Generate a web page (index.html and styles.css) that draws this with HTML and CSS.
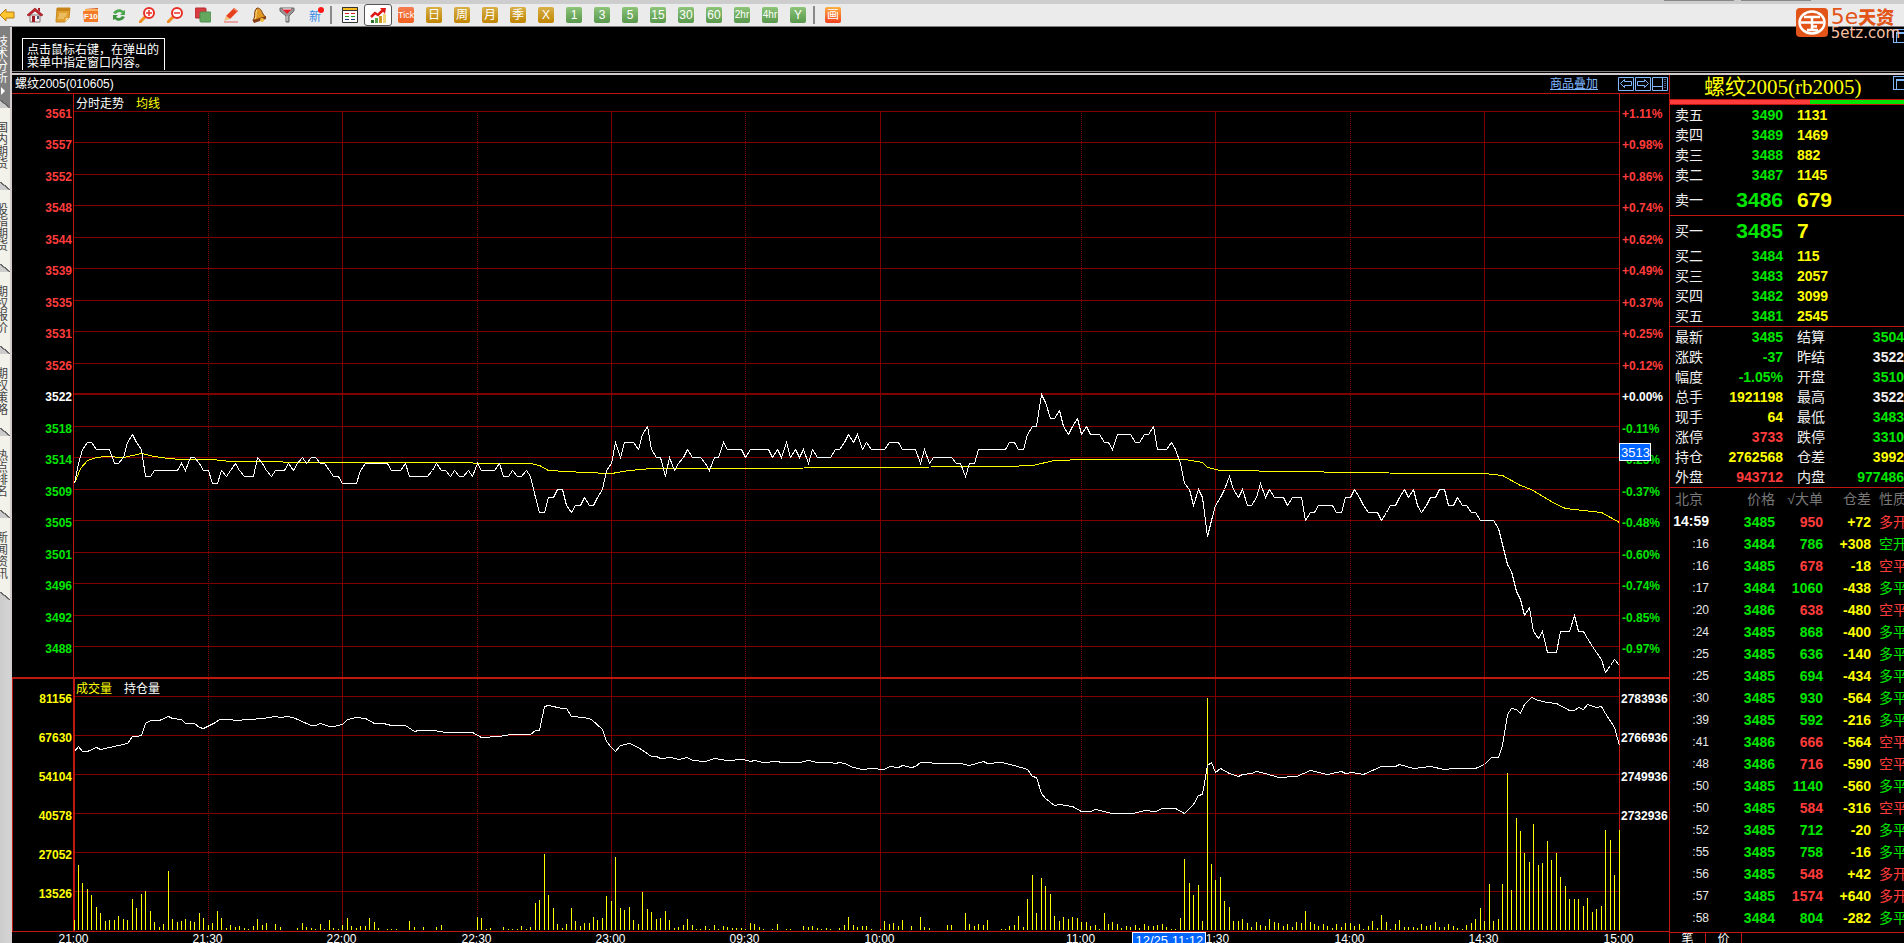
FILE: index.html
```html
<!DOCTYPE html>
<html lang="zh-CN">
<head>
    <meta charset="UTF-8">
    <meta name="viewport" content="width=device-width, initial-scale=1.0">
    <title>螺纹2005 分时走势</title>
    <link rel="stylesheet" href="styles.css">
</head>
<body>
    <div class="titlebar"><span></span><span></span></div>
    <div class="toolbar">
        <button class="tool" aria-label="后退"><svg viewBox="0 0 16 16"><path d="M1 8l6-6v3h8v6H7v3z" fill="#ffc62e" stroke="#b87a10"/></svg></button>
        <button class="tool" aria-label="首页"><svg viewBox="0 0 16 16"><path d="M3 8h10v7H3z" fill="#f4eeee" stroke="#877"/><path d="M0 8l8-7 8 7-2 1-6-5-6 5z" fill="#c4202c" stroke="#8a1018" stroke-width=".6"/><path d="M11 1h2v4l-2-2z" fill="#a02028"/><path d="M5 9h3v6H5z" fill="#a01c28"/><path d="M10 9h2v3h-2z" fill="#557"/></svg></button>
        <button class="tool" aria-label="便笺"><svg viewBox="0 0 16 16"><path d="M2 1h13l-1 10-4 4H1z" fill="#e0a030" stroke="#c88820"/><path d="M2 1h13v3H2z" fill="#c88418"/><path d="M4 7h8M4 9h7M3 11h6" stroke="#f8d890"/><path d="M10 15l1-4h3z" fill="#ffe2a0"/></svg></button>
        <button class="tool" aria-label="F10资料"><svg viewBox="0 0 16 16"><path d="M2 2l13-1v13l-13 1z" fill="#d8501c"/><path d="M0 4h15v11H1z" fill="#f37b28"/><path d="M2 2h13v2H2z" fill="#ffb25c"/><text x="1" y="12" class="icon-f10">F10</text></svg></button>
        <button class="tool" aria-label="刷新"><svg viewBox="0 0 16 16"><path d="M2 6c2-4 8-5 10-2l2-1v5H9l2-2c-2-2-5-1-6 1z" fill="#4ca84c"/><path d="M14 10c-2 4-8 5-10 2l-2 1V8h5l-2 2c2 2 5 1 6-1z" fill="#3c9440"/></svg></button>
        <button class="tool" aria-label="放大"><svg viewBox="0 0 16 16"><path d="M6 10l-5 5" stroke="#f08c20" stroke-width="3" stroke-linecap="round"/><circle cx="10" cy="6" r="5" fill="#fff" stroke="#e83028" stroke-width="2"/><path d="M7 6h6M10 3v6" stroke="#e83028" stroke-width="1.5"/></svg></button>
        <button class="tool" aria-label="缩小"><svg viewBox="0 0 16 16"><path d="M6 10l-5 5" stroke="#f08c20" stroke-width="3" stroke-linecap="round"/><circle cx="10" cy="6" r="5" fill="#fff" stroke="#e83028" stroke-width="2"/><path d="M7 6h6" stroke="#e83028" stroke-width="1.5"/></svg></button>
        <button class="tool" aria-label="叠加"><svg viewBox="0 0 16 16"><rect y="1" width="11" height="10" rx="1" fill="#d83c40" stroke="#b02c30"/><rect x="5" y="5" width="11" height="10" rx="1" fill="#64a860" stroke="#4c8c4c"/></svg></button>
        <button class="tool" aria-label="画线"><svg viewBox="0 0 16 16"><path d="M3 9l8-8 4 3-8 8z" fill="#e8401c"/><path d="M3 9l4 3-6 2z" fill="#f4c080"/><path d="M11 1l4 3-1 1-4-3z" fill="#f08060"/><path d="M1 15h14" stroke="#e88c8c" stroke-width="1.5"/></svg></button>
        <button class="tool" aria-label="预警"><svg viewBox="0 0 16 16"><path d="M6 1c4 0 5 4 6 6l3 4-12 4-1-2c3-3 0-9 4-12z" fill="#e09a24" stroke="#7c3c14"/><path d="M2 13l13-4v3L3 16z" fill="#8a4018"/><path d="M6 3c-2 3 0 6-2 9" stroke="#ffe08c" fill="none"/><circle cx="11" cy="13" r="2" fill="#f0c040"/></svg></button>
        <button class="tool" aria-label="选股"><svg viewBox="0 0 16 16"><path d="M1 1h14v3l-5 5v6H7V9L1 4z" fill="#999" stroke="#666"/><path d="M3 2h10l-5 5z" fill="#e81c28"/><path d="M4 2h8" stroke="#fff"/><path d="M8 9v5" stroke="#ddd"/></svg></button>
        <button class="tool tool-new" aria-label="新消息">新</button>
        <span class="sep"></span>
        <button class="tool" aria-label="报价列表"><svg viewBox="0 0 16 16"><path d="M.5.5h15v15H.5z" fill="#fff" stroke="#333"/><path d="M.5.5h15v3H.5z" fill="#f8bc20" stroke="#333"/><path d="M3 6.500h4M9 6.500h4" stroke="#e02020"/><path d="M3 9.500h4M9 9.500h4" stroke="#20a020"/><path d="M3 12.500h4M9 12.500h4" stroke="#203080"/></svg></button>
        <button class="tool tool-active" aria-label="分时图"><svg viewBox="0 0 16 16"><path d="M1 13h3v3H1z" fill="#30702c"/><path d="M5 11h3v5H5z" fill="#58a84c"/><path d="M9 9h3v7H9z" fill="#d09820"/><path d="M13 7h3v9h-3z" fill="#f4d478"/><path d="M1 10l4-4 3 2 5-5" stroke="#e01818" stroke-width="2.5" fill="none"/><path d="M10 1h6l-1 6z" fill="#e01818"/></svg></button>
        <button class="tool"><span class="chip chip-tick">Tick</span></button>
        <button class="tool"><span class="chip chip-gold">日</span></button>
        <button class="tool"><span class="chip chip-gold">周</span></button>
        <button class="tool"><span class="chip chip-gold">月</span></button>
        <button class="tool"><span class="chip chip-gold">季</span></button>
        <button class="tool"><span class="chip chip-gold">X</span></button>
        <button class="tool"><span class="chip">1</span></button>
        <button class="tool"><span class="chip">3</span></button>
        <button class="tool"><span class="chip">5</span></button>
        <button class="tool"><span class="chip">15</span></button>
        <button class="tool"><span class="chip">30</span></button>
        <button class="tool"><span class="chip">60</span></button>
        <button class="tool"><span class="chip chip-small">2hr</span></button>
        <button class="tool"><span class="chip chip-small">4hr</span></button>
        <button class="tool"><span class="chip">Y</span></button>
        <span class="sep"></span>
        <button class="tool"><span class="chip chip-draw">画</span></button>
    </div>

    <a href="#" class="logo" aria-label="5e天资 5etz.com">
        <svg viewBox="0 0 32 29"><rect width="32" height="29" rx="4" fill="#e25418"/><ellipse cx="16" cy="14.500" rx="12.500" ry="11" fill="none" stroke="#fff" stroke-width="2.500"/><path d="M8 9h16M5 14.500h22M16 9v13M16 18.500h5M11 22h11" stroke="#fff" stroke-width="2.500" fill="none"/></svg>
        <span class="logo-text">
            <span class="logo-name">5e<b>天资</b></span>
            <span class="logo-site">5etz.com</span>
        </span>
    </a>

    <div class="workspace">
        <nav class="side">
            <a href="#" class="side-tab current"><span>技术分析</span><i></i></a>
            <a href="#" class="side-tab"><span>国内期货</span></a>
            <a href="#" class="side-tab"><span>股指期货</span></a>
            <a href="#" class="side-tab"><span>期权报价</span></a>
            <a href="#" class="side-tab"><span>期权策略</span></a>
            <a href="#" class="side-tab"><span>热点排名</span></a>
            <a href="#" class="side-tab"><span>新闻资讯</span></a>
        </nav>

        <div class="content">
            <div class="hint-pane">
                <p class="hint">点击鼠标右键，在弹出的<br>菜单中指定窗口内容。</p>
                <button class="win-btn" aria-label="还原"></button>
            </div>

            <div class="panes">
                <main class="chart-pane">
                    <div class="chart-head">
                        <h1>螺纹2005(010605)</h1>
                        <a href="#" class="overlay-link">商品叠加</a>
                        <div class="chart-btns">
                            <button aria-label="上一个"><svg viewBox="0 0 16 14"><path d="M.5.5h15v13H.5z"/><path d="M6.500 2.500l-4 4 4 4v-2h7v-4h-7z"/></svg></button>
                            <button aria-label="下一个"><svg viewBox="0 0 16 14"><path d="M.5.5h15v13H.5z"/><path d="M9.500 2.500l4 4-4 4v-2h-7v-4h7z"/></svg></button>
                            <button aria-label="侧栏"><svg viewBox="0 0 16 14"><path d="M.5.5h15v13H.5zM.5 9.500h10M10.500 0v14"/><path d="M13 2v10" stroke-dasharray="1 1"/></svg></button>
                        </div>
                    </div>
                    <svg id="chart" class="chart" role="img" aria-label="分时走势"></svg>
                </main>

                <aside class="quote">
                    <header class="quote-head">
                        <h2>螺纹2005(rb2005)</h2>
                        <button class="win-btn" aria-label="还原"></button>
                    </header>
                    <div class="ratio"><span></span></div>

                    <table class="book">
                        <tr><th>卖五</th><td class="down">3490</td><td>1131</td></tr>
                        <tr><th>卖四</th><td class="down">3489</td><td>1469</td></tr>
                        <tr><th>卖三</th><td class="down">3488</td><td>882</td></tr>
                        <tr><th>卖二</th><td class="down">3487</td><td>1145</td></tr>
                        <tr class="best"><th>卖一</th><td class="down">3486</td><td>679</td></tr>
                    </table>
                    <table class="book">
                        <tr class="best"><th>买一</th><td class="down">3485</td><td>7</td></tr>
                        <tr><th>买二</th><td class="down">3484</td><td>115</td></tr>
                        <tr><th>买三</th><td class="down">3483</td><td>2057</td></tr>
                        <tr><th>买四</th><td class="down">3482</td><td>3099</td></tr>
                        <tr><th>买五</th><td class="down">3481</td><td>2545</td></tr>
                    </table>
                    <table class="stats">
                        <tr><th>最新</th><td class="down">3485</td><th>结算</th><td class="down">3504</td></tr>
                        <tr><th>涨跌</th><td class="down">-37</td><th>昨结</th><td class="flat">3522</td></tr>
                        <tr><th>幅度</th><td class="down">-1.05%</td><th>开盘</th><td class="down">3510</td></tr>
                        <tr><th>总手</th><td>1921198</td><th>最高</th><td class="flat">3522</td></tr>
                        <tr><th>现手</th><td>64</td><th>最低</th><td class="down">3483</td></tr>
                        <tr><th>涨停</th><td class="up">3733</td><th>跌停</th><td class="down">3310</td></tr>
                        <tr><th>持仓</th><td>2762568</td><th>仓差</th><td>3992</td></tr>
                        <tr><th>外盘</th><td class="up">943712</td><th>内盘</th><td class="down">977486</td></tr>
                    </table>
                    <table class="ticks">
                        <thead>
                            <tr><th>北京</th><th>价格</th><th>√大单</th><th>仓差</th><th>性质</th></tr>
                        </thead>
                        <tbody>
                            <tr class="buy"><td><b>14:59</b></td><td>3485</td><td>950</td><td>+72</td><td>多开</td></tr>
                            <tr><td>:16</td><td>3484</td><td>786</td><td>+308</td><td>空开</td></tr>
                            <tr class="buy"><td>:16</td><td>3485</td><td>678</td><td>-18</td><td>空平</td></tr>
                            <tr><td>:17</td><td>3484</td><td>1060</td><td>-438</td><td>多平</td></tr>
                            <tr class="buy"><td>:20</td><td>3486</td><td>638</td><td>-480</td><td>空平</td></tr>
                            <tr><td>:24</td><td>3485</td><td>868</td><td>-400</td><td>多平</td></tr>
                            <tr><td>:25</td><td>3485</td><td>636</td><td>-140</td><td>多平</td></tr>
                            <tr><td>:25</td><td>3485</td><td>694</td><td>-434</td><td>多平</td></tr>
                            <tr><td>:30</td><td>3485</td><td>930</td><td>-564</td><td>多平</td></tr>
                            <tr><td>:39</td><td>3485</td><td>592</td><td>-216</td><td>多平</td></tr>
                            <tr class="buy"><td>:41</td><td>3486</td><td>666</td><td>-564</td><td>空平</td></tr>
                            <tr class="buy"><td>:48</td><td>3486</td><td>716</td><td>-590</td><td>空平</td></tr>
                            <tr><td>:50</td><td>3485</td><td>1140</td><td>-560</td><td>多平</td></tr>
                            <tr class="buy"><td>:50</td><td>3485</td><td>584</td><td>-316</td><td>空平</td></tr>
                            <tr><td>:52</td><td>3485</td><td>712</td><td>-20</td><td>多平</td></tr>
                            <tr><td>:55</td><td>3485</td><td>758</td><td>-16</td><td>多平</td></tr>
                            <tr class="buy"><td>:56</td><td>3485</td><td>548</td><td>+42</td><td>多开</td></tr>
                            <tr class="buy"><td>:57</td><td>3485</td><td>1574</td><td>+640</td><td>多开</td></tr>
                            <tr><td>:58</td><td>3484</td><td>804</td><td>-282</td><td>多平</td></tr>
                        </tbody>
                    </table>
                    <div class="quote-tabs">
                        <button class="on">笔</button><button>价</button>
                    </div>
                </aside>
            </div>
        </div>
    </div>
    <script src="chart.js"></script>
</body>
</html>
```
FILE: styles.css
```css
* {
    box-sizing: border-box;
}
body {
    margin: 0;
    height: 100vh;
    display: flex;
    flex-direction: column;
    overflow: hidden;
    background: #000;
    color: #fff;
    font-family: "Liberation Sans", "Noto Sans CJK SC", sans-serif;
    font-size: 12px;
}
button {
    padding: 0;
    border: none;
    background: none;
    color: inherit;
    font: inherit;
    cursor: pointer;
}
a {
    color: inherit;
    text-decoration: none;
}
h1, h2, p {
    margin: 0;
    font-weight: normal;
}

/* top bars */
.titlebar {
    flex: none;
    height: 4px;
    padding-right: 93px;
    display: flex;
    justify-content: flex-end;
    gap: 7px;
    background: #cdcdcd;
}
.titlebar span {
    width: 70px;
    height: 1px;
    background: #888;
}
.toolbar {
    flex: none;
    height: 23px;
    margin-left: -7px;
    display: flex;
    align-items: center;
    background: #ebebeb;
    border-bottom: 1px solid #808080;
}
.tool {
    flex: none;
    width: 28px;
    height: 22px;
    display: flex;
    align-items: center;
    justify-content: center;
}
.tool svg {
    width: 16px;
    height: 16px;
}
.icon-f10 {
    font-size: 8px;
    font-weight: bold;
    fill: #fff;
}
.tool-new {
    position: relative;
    color: #3c8ce8;
}
.tool-new::after {
    content: "";
    position: absolute;
    top: 3px;
    right: 5px;
    width: 6px;
    height: 6px;
    border-radius: 50%;
    background: #ff1818;
}
.tool-active {
    background: #fff;
    border: 1px solid #555;
    border-radius: 3px;
}
.sep {
    flex: none;
    width: 2px;
    height: 18px;
    margin: 0 4px 0 1px;
    background: #8a8a8a;
}
.chip {
    width: 16px;
    height: 16px;
    border-radius: 2px;
    background: linear-gradient(#8cc478, #58984c);
    color: #fff;
    font-size: 12px;
    line-height: 16px;
    text-align: center;
    white-space: nowrap;
}
.chip-gold {
    background: linear-gradient(#d8b048, #c08400);
}
.chip-tick {
    background: linear-gradient(#f47c50, #f06020);
    font-size: 9px;
}
.chip-draw {
    background: linear-gradient(#ffb040, #f04020);
}
.chip-small {
    font-size: 10px;
}

/* logo floats over the toolbar and the top pane */
.logo {
    position: absolute;
    top: 8px;
    right: 4px;
    z-index: 2;
    display: flex;
    gap: 3px;
    color: #e25418;
    font-family: "DejaVu Sans", "Noto Sans CJK SC", sans-serif;
}
.logo svg {
    width: 32px;
    height: 29px;
}
.logo-text {
    display: flex;
    flex-direction: column;
}
.logo-name {
    font-size: 22px;
    line-height: 17px;
}
.logo-name b {
    font-size: 18px;
    font-weight: 900;
}
.logo-site {
    font-size: 15px;
    line-height: 14px;
    color: #f8c0a0;
}

/* side tabs */
.workspace {
    flex: 1;
    min-height: 0;
    display: flex;
}
.side {
    flex: none;
    width: 12px;
    overflow: hidden;
    background: linear-gradient(90deg, #ccc, #d4d4d4);
    border-right: 2px solid #d4cccc;
}
.side-tab {
    position: relative;
    display: block;
    height: 82px;
    padding-top: 14px;
    background: #f2f2ea;
    color: #444;
}
.side-tab span {
    display: block;
    width: 12px;
    margin-left: -4px;
    line-height: 12px;
    word-break: break-all;
}
.side-tab::after {
    content: "";
    position: absolute;
    left: 0;
    bottom: 0;
    width: 10px;
    height: 8px;
    background: linear-gradient(to top right, #ccc 45%, #666 46%, #666 56%, transparent 57%);
}
.side-tab.current {
    height: 81px;
    padding-top: 9px;
    background: #808080;
    color: #fff;
}
.side-tab i {
    display: block;
    width: 0;
    margin: 3px 0 0 1px;
    border: 4px solid transparent;
    border-left-color: #fff;
}

.content {
    flex: 1;
    min-width: 0;
    display: flex;
    flex-direction: column;
}
.hint-pane {
    flex: none;
    display: flex;
    justify-content: space-between;
    align-items: flex-start;
    height: 48px;
    padding: 2px 0 0 10px;
    overflow: hidden;
    border-bottom: 2px solid #d4cccc;
    box-shadow: inset 0 -1px #000, inset 0 -2px #808080;
}
.hint {
    height: 32px;
    margin-top: 9px;
    padding: 5px 5px 0 4px;
    border: 1px solid #fff;
    border-bottom: none;
    line-height: 13px;
}
.win-btn {
    flex: none;
    width: 11px;
    height: 14px;
    border: 1px solid #80b8ff;
    border-right: none;
    box-shadow: inset 2px 2px #000, inset 3px 4px #80b8ff;
    background: #000;
}
.panes {
    flex: 1;
    min-height: 0;
    display: flex;
}

/* chart */
.chart-pane {
    flex: 1;
    min-width: 0;
    display: flex;
    flex-direction: column;
}
.chart-head {
    flex: none;
    height: 19px;
    padding-left: 3px;
    display: flex;
    align-items: center;
    border-bottom: 1px solid #c01810;
    line-height: 16px;
}
.chart-head h1 {
    flex: 1;
    font-size: 12px;
}
.overlay-link {
    margin-right: 20px;
    color: #80b8ff;
    text-decoration: underline;
}
.chart-btns {
    display: flex;
    gap: 1px;
    padding-right: 1px;
}
.chart-btns button, .chart-btns svg {
    display: block;
    width: 16px;
    height: 14px;
}
.chart-btns path {
    fill: none;
    stroke: #80b8ff;
}
.chart {
    flex: 1;
    display: block;
    width: 100%;
    min-height: 0;
    overflow: hidden;
}
.chart line, .chart polyline, .chart rect {
    shape-rendering: crispEdges;
}
.chart text {
    font-size: 12px;
    fill: #fff;
}
.grid {
    stroke: #800000;
}
.grid-base {
    stroke: #800000;
    stroke-width: 2;
}
.grid-dot {
    stroke: #800000;
    stroke-dasharray: 1 1;
}
.axis {
    stroke: #c01810;
}
.axis-bold {
    stroke: #c01810;
    stroke-width: 2;
}
.line-price {
    fill: none;
    stroke: #fff;
}
.line-avg {
    fill: none;
    stroke: #ff0;
}
.bar {
    stroke: #ff0;
}
.chart .num {
    font-weight: bold;
}
.chart .t-up {
    fill: #ff3c3c;
}
.chart .t-down {
    fill: #00e600;
}
.chart .t-yellow {
    fill: #ff0;
}
.chart .right {
    text-anchor: end;
}
.chart .mid {
    text-anchor: middle;
}
.marker {
    fill: #0064ff;
    stroke: #fff;
}
.chart .marker-text {
    font-size: 13px;
}

/* quote panel */
.quote {
    flex: none;
    width: 235px;
    display: flex;
    flex-direction: column;
    overflow: hidden;
    border-left: 1px solid #c01810;
    font-size: 14px;
}
.quote-head {
    flex: none;
    display: flex;
    justify-content: space-between;
    height: 24px;
    padding: 1px 0 0 34px;
}
.quote-head h2 {
    color: #ff0;
    font-family: "Liberation Serif", "Noto Sans CJK SC", serif;
    font-size: 21px;
    line-height: 23px;
}
.ratio {
    flex: none;
    height: 6px;
    border: solid #c01810;
    border-width: 1px 0;
    background: #00e600;
}
.ratio span {
    display: block;
    width: 60%;
    height: 4px;
    background: #ff3c3c;
}
.quote table {
    flex: none;
    table-layout: fixed;
    border-collapse: separate;
    border-spacing: 0;
    white-space: nowrap;
}
.quote th, .quote td {
    padding: 0;
    height: 20px;
    line-height: 20px;
}
.quote th {
    font-weight: normal;
    text-align: left;
    color: #f0f0f0;
}
.quote th:first-child {
    padding-left: 5px;
}
.quote td {
    font-weight: bold;
    text-align: right;
    color: #ff0;
}
.quote td.up {
    color: #ff3c3c;
}
.quote td.down {
    color: #00e600;
}
.quote td.flat {
    color: #f0f0f0;
}
.book, .stats {
    width: 234px;
    border-bottom: 1px solid #c01810;
}
.book th:first-child, .stats th:first-child {
    width: 33px;
}
.book td:nth-child(2), .stats td:nth-child(2) {
    width: 80px;
}
.book td:nth-child(3) {
    padding-left: 14px;
    text-align: left;
}
.stats th:nth-child(3) {
    width: 42px;
    padding-left: 14px;
}
.book .best th, .book .best td {
    height: 30px;
    line-height: 30px;
}
.book .best td {
    font-size: 21px;
}
.ticks {
    width: 237px;
}
.ticks th, .ticks td {
    height: 22px;
    line-height: 22px;
    text-align: right;
}
.ticks th {
    color: #787878;
}
.ticks th:nth-child(1) {
    width: 41px;
    text-align: left;
}
.ticks th:nth-child(2) {
    width: 64px;
}
.ticks th:nth-child(3), .ticks th:nth-child(4) {
    width: 48px;
}
.ticks th:nth-child(5), .ticks td:nth-child(5) {
    padding-left: 8px;
    text-align: left;
    font-weight: normal;
}
.ticks td:nth-child(1) {
    padding-right: 2px;
    color: #e8e8e8;
    font-size: 12px;
    font-weight: normal;
}
.ticks td b {
    font-size: 14px;
    color: #fff;
}
.ticks td:nth-child(2), .ticks td:nth-child(3), .ticks td:nth-child(5) {
    color: #00e600;
}
.ticks .buy td:nth-child(3), .ticks .buy td:nth-child(5) {
    color: #ff3c3c;
}
.quote-tabs {
    flex: 1;
    margin-top: 3px;
    display: flex;
    align-items: flex-start;
    overflow: hidden;
    border-top: 1px solid #c01810;
}
.quote-tabs button {
    width: 36px;
    font-size: 12px;
    line-height: 13px;
    border-right: 1px solid #c01810;
}
```
FILE: chart.js
```js
const NS = 'http://www.w3.org/2000/svg';
const LEFT = 62;
const RIGHT = 50;
const MINUTES = 345;

// price axis, one entry per grid line
const levels = [3561, 3557, 3552, 3548, 3544, 3539, 3535, 3531, 3526, 3522, 3518, 3514, 3509, 3505, 3501, 3496, 3492, 3488, 3483];
const percents = ['+1.11%', '+0.98%', '+0.86%', '+0.74%', '+0.62%', '+0.49%', '+0.37%', '+0.25%', '+0.12%', '+0.00%', '-0.11%', '-0.25%', '-0.37%', '-0.48%', '-0.60%', '-0.74%', '-0.85%', '-0.97%'];
const volumes = [81156, 67630, 54104, 40578, 27052, 13526];
const holdings = [2783936, 2766936, 2749936, 2732936];
const times = [[0, '21:00'], [30, '21:30'], [60, '22:00'], [90, '22:30'], [120, '23:00'], [150, '09:30'], [180, '10:00'], [225, '11:00'], [255, '11:30'], [285, '14:00'], [315, '14:30'], [345, '15:00']];

// last price of each minute, minus 3400
const price = [
    110, 113, 115, 116, 116, 115, 115, 115, 115, 113, 113, 114, 116, 117, 116, 115, 111, 111, 112, 112,
    112, 112, 112, 112, 113, 112, 114, 114, 113, 112, 112, 110, 110, 112, 111, 112, 113, 112, 111, 111,
    111, 114, 113, 112, 111, 112, 112, 112, 113, 112, 113, 114, 113, 114, 114, 113, 113, 112, 111, 111,
    110, 110, 110, 110, 112, 113, 113, 113, 113, 113, 113, 112, 112, 112, 113, 111, 111, 111, 111, 111,
    112, 113, 112, 112, 111, 112, 111, 111, 112, 111, 113, 112, 112, 112, 112, 113, 111, 111, 112, 111,
    111, 112, 111, 108, 106, 106, 108, 108, 109, 109, 107, 106, 107, 107, 108, 107, 107, 108, 109, 112,
    113, 116, 114, 116, 116, 116, 115, 117, 118, 115, 114, 114, 111, 114, 112, 113, 114, 115, 114, 114,
    114, 113, 112, 114, 114, 116, 115, 115, 115, 115, 114, 115, 115, 115, 115, 115, 114, 115, 114, 116,
    114, 115, 114, 115, 113, 115, 114, 114, 114, 114, 115, 115, 116, 117, 116, 117, 115, 116, 115, 115,
    115, 115, 116, 116, 116, 115, 115, 115, 115, 113, 115, 113, 114, 114, 114, 114, 114, 113, 113, 111,
    113, 113, 115, 115, 115, 115, 115, 115, 115, 116, 116, 115, 115, 117, 118, 118, 122, 121, 119, 119,
    120, 118, 117, 118, 119, 117, 118, 117, 117, 117, 116, 116, 115, 117, 117, 117, 117, 116, 116, 117,
    117, 118, 115, 115, 115, 116, 115, 113, 110, 109, 107, 109, 108, 103, 105, 107, 108, 109, 111, 109,
    108, 109, 107, 107, 108, 110, 108, 109, 108, 108, 108, 107, 108, 108, 108, 105, 106, 106, 107, 107,
    107, 107, 106, 106, 108, 108, 109, 108, 107, 106, 106, 106, 105, 106, 107, 107, 108, 109, 108, 109,
    107, 106, 107, 108, 108, 109, 109, 107, 107, 108, 107, 107, 106, 106, 105, 105, 105, 105, 104, 102,
    99, 98, 95, 94, 92, 93, 90, 89, 90, 87, 87, 87, 90, 90, 90, 92, 90, 90, 89, 88,
    87, 86, 84, 85, 86, 85
];

// [minute, distance below the top of the chart] at 849px height
const average = [
    [0, 389], [1.5, 374], [3, 366], [5, 363], [7, 362], [11, 363], [13, 361], [15, 359], [18, 362], [21, 364],
    [24, 365], [31, 365], [35, 367], [58, 368], [76, 368], [102, 369], [104, 371], [106, 376], [114, 378], [120, 379],
    [124, 376], [129, 374], [151, 374], [175, 373], [208, 372], [214, 371], [219, 366], [226, 365], [248, 365], [252, 368],
    [253, 373], [256, 376], [273, 377], [285, 378], [302, 379], [315, 379], [319, 381], [323, 391], [325.5, 395], [330.5, 409],
    [333, 414], [341, 418], [345, 428]
];
const holding = [
    [0, 657], [1, 652], [2, 657], [3, 657], [5, 653], [6, 655], [12, 649], [13, 642], [14, 642], [15, 641],
    [16, 629], [17, 626], [19, 626], [21, 622], [22, 624], [24, 625], [25, 629], [27, 629], [28, 633], [29, 634],
    [31.5, 628], [32.5, 625], [35, 625], [36, 626], [42, 624], [45, 622], [46, 623], [48, 622], [49.5, 624], [52, 629],
    [53, 631], [54, 631], [55, 629], [57, 632], [58, 632], [60, 630], [61, 625], [63, 623], [65, 624], [67, 629],
    [69, 629], [71, 631], [74, 631], [76, 637], [77, 636], [80.5, 636], [83, 638], [89, 638], [91, 643], [95, 642],
    [97.5, 640], [102, 640], [103, 636], [104, 636], [105, 612], [106, 611], [109, 614], [110, 614], [111, 622], [114, 623],
    [115.5, 625], [118, 635], [119, 647], [120, 653], [121, 657], [122, 651], [124, 649], [126, 653], [129, 662], [130, 662],
    [131, 664], [133.5, 663], [135, 665], [137, 663], [138, 666], [141, 667], [143, 664], [146, 666], [149.5, 665], [151, 667],
    [152, 666], [154, 668], [157, 667], [158, 668], [162, 668], [164, 666], [166, 668], [169, 668], [170, 669], [171, 668],
    [172, 669], [174, 673], [176, 675], [178, 674], [181, 675], [182, 672], [184, 673], [185, 671], [187, 673], [188, 672],
    [189, 668], [194, 669], [198, 669], [200, 671], [203, 667], [204, 669], [207, 668], [210, 671], [213, 675], [214, 682],
    [215, 683], [216, 699], [217, 704], [219, 711], [220, 710], [223, 712], [225, 717], [227, 717], [228, 715], [232, 719],
    [236.5, 719], [239, 716], [241.5, 717], [243, 714], [246, 714], [248, 719], [250, 710], [251, 701], [252, 700], [253, 671],
    [254, 668], [255, 678], [256, 674], [258, 679], [260, 682], [261, 680], [263, 679], [264, 677], [266, 679], [269, 683],
    [273, 682], [276, 676], [280, 680], [283, 677], [284, 679], [285.5, 678], [288, 680], [292, 672], [295, 672], [296, 670],
    [299, 674], [303, 672], [306, 675], [308, 674], [313, 674], [315, 670], [316.5, 663], [318, 663], [319, 651], [320, 620],
    [321, 614], [322, 615], [323, 619], [324, 610], [325.5, 603], [327, 606], [329, 608], [331, 609], [334, 616], [335, 616],
    [336, 613], [337, 615], [338, 610], [340, 613], [341, 612], [342, 619], [344, 633], [345, 651]
];
// volume of each minute, 39 to a grid line
const volume = [
    10, 65, 47, 41, 35, 23, 17, 9, 10, 10, 14, 11, 10, 31, 22, 36, 39, 19, 8, 3,
    6, 59, 11, 8, 9, 11, 9, 8, 17, 12, 5, 7, 19, 12, 2, 5, 3, 4, 2, 1,
    4, 11, 5, 7, 0, 6, 3, 0, 0, 0, 2, 7, 3, 2, 1, 6, 1, 10, 2, 1,
    5, 12, 4, 2, 4, 4, 12, 8, 2, 0, 1, 1, 1, 0, 0, 9, 3, 0, 3, 0,
    0, 3, 5, 0, 0, 0, 0, 0, 0, 0, 13, 12, 1, 2, 0, 0, 3, 1, 1, 1,
    4, 1, 3, 27, 30, 76, 35, 22, 6, 2, 6, 22, 9, 4, 7, 7, 13, 10, 12, 34,
    29, 73, 22, 20, 23, 10, 6, 38, 21, 18, 11, 12, 19, 10, 2, 3, 5, 11, 5, 1,
    1, 4, 1, 5, 1, 4, 3, 2, 2, 2, 1, 7, 6, 3, 1, 0, 1, 6, 0, 1,
    1, 0, 0, 4, 3, 4, 2, 1, 2, 1, 0, 2, 5, 13, 5, 3, 4, 4, 1, 0,
    1, 9, 6, 7, 4, 10, 0, 4, 0, 13, 3, 2, 0, 0, 0, 5, 5, 0, 0, 17,
    6, 4, 6, 5, 10, 0, 0, 1, 1, 4, 5, 14, 3, 31, 55, 17, 52, 44, 36, 14,
    9, 13, 11, 13, 12, 8, 8, 4, 5, 1, 17, 6, 8, 6, 2, 4, 3, 5, 2, 6,
    4, 4, 5, 6, 3, 1, 1, 12, 71, 47, 35, 45, 9, 232, 66, 50, 53, 29, 23, 9,
    9, 11, 7, 3, 8, 5, 4, 11, 8, 7, 4, 6, 3, 8, 7, 19, 8, 6, 4, 6,
    4, 2, 6, 3, 7, 7, 4, 6, 1, 4, 9, 2, 15, 8, 1, 6, 10, 3, 3, 3,
    2, 6, 4, 5, 8, 3, 3, 6, 4, 2, 1, 5, 7, 11, 22, 9, 46, 9, 11, 46,
    157, 40, 112, 99, 77, 68, 106, 65, 67, 89, 70, 77, 53, 44, 31, 31, 31, 24, 32, 18,
    21, 24, 100, 90, 55, 100
];

const svg = document.getElementById('chart');

function add(tag, attrs, text) {
    const el = document.createElementNS(NS, tag);
    for (const key in attrs) el.setAttribute(key, attrs[key]);
    if (text !== undefined) el.textContent = text;
    svg.appendChild(el);
}
function line(x1, y1, x2, y2, cls) {
    add('line', { x1, y1, x2, y2, class: cls });
}

function draw() {
    svg.replaceChildren();
    const w = svg.clientWidth;
    const h = svg.clientHeight;
    const scale = (h - 48) / 801;
    const step = 31.5 * scale;
    const right = w - RIGHT;
    const split = Math.round(17 + 18 * step);
    const base = h - 12;
    const x = m => Math.floor(LEFT + (right - LEFT) * m / MINUTES) + 0.5;
    const levelY = i => Math.floor(17 + i * step) + 0.5;
    const volY = i => Math.round(split + 18 + 39 * scale * i) + 0.5;
    const priceY = p => {
        let i = 9;
        while (i < levels.length - 2 && levels[i + 1] > p) i++;
        return levelY(i) + (levels[i] - p) / (levels[i] - levels[i + 1]) * (levelY(i + 1) - levelY(i));
    };

    for (let i = 0; i < 18; i++) {
        if (i === 9) line(LEFT, levelY(i) - 0.5, right, levelY(i) - 0.5, 'grid-base');
        else line(LEFT, levelY(i), right, levelY(i), 'grid');
    }
    for (let i = 0; i < 6; i++) line(LEFT, volY(i), right, volY(i), 'grid');
    times.slice(1, -1).forEach(([m]) => {
        const dotted = [30, 90, 150, 225, 285].includes(m);
        line(x(m), 17, x(m), base, dotted ? 'grid-dot' : 'grid');
    });

    // frames
    line(LEFT - 0.5, 0, LEFT - 0.5, base, 'axis');
    line(LEFT, split, LEFT, base, 'axis-bold');
    line(0.5, split, 0.5, base, 'axis');
    line(right + 0.5, 0, right + 0.5, base, 'axis');
    line(0, split, w, split, 'axis-bold');
    line(0, base + 0.5, w, base + 0.5, 'axis');

    volume.forEach((v, m) => {
        if (v) line(x(m), base - 1 - v * scale, x(m), base - 1, 'bar');
    });
    const path = pts => pts.map(([m, y]) => x(m) + ',' + (Math.round(y * h / 849) + 0.5)).join(' ');
    add('polyline', { points: path(holding), class: 'line-price' });
    add('polyline', { points: path(average), class: 'line-avg' });
    add('polyline', { points: price.map((p, m) => x(m) + ',' + (Math.floor(priceY(p + 3400)) + 0.5)).join(' '), class: 'line-price' });

    percents.forEach((p, i) => {
        const cls = i < 9 ? ' t-up' : i > 9 ? ' t-down' : '';
        add('text', { x: LEFT - 2, y: levelY(i) + 6.5, class: 'num right' + cls }, levels[i]);
        add('text', { x: right + 3, y: levelY(i) + 6.5, class: 'num' + cls }, p);
    });
    volumes.forEach((v, i) => add('text', { x: LEFT - 2, y: volY(i) + 6.5, class: 'num right t-yellow' }, v));
    holdings.forEach((v, i) => add('text', { x: right + 2, y: volY(i) + 6.5, class: 'num' }, v));
    times.forEach(([m, t]) => add('text', { x: x(m) - 1, y: h, class: 'mid' }, t));

    add('text', { x: LEFT + 2, y: 14 }, '分时走势');
    add('text', { x: LEFT + 62, y: 14, class: 't-yellow' }, '均线');
    add('text', { x: LEFT + 2, y: split + 15, class: 't-yellow' }, '成交量');
    add('text', { x: LEFT + 50, y: split + 15 }, '持仓量');

    // cursor readouts
    const my = Math.floor(priceY(3513)) - 20;
    add('rect', { x: right + 0.5, y: my + 0.5, width: 31, height: 17, class: 'marker' });
    add('text', { x: right + 2, y: my + 14, class: 'marker-text' }, '3513');
    const mx = x(237);
    add('rect', { x: mx - 3, y: base + 1.5, width: 73, height: 20, class: 'marker' });
    add('text', { x: mx, y: base + 14, class: 'marker-text' }, '12/25 11:12');
}

draw();
window.addEventListener('resize', draw);
```
